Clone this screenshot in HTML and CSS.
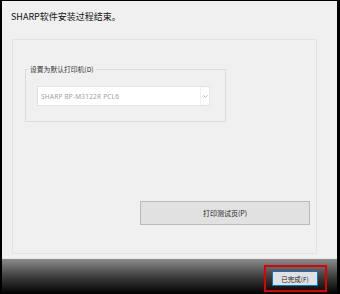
FILE: index.html
```html
<!DOCTYPE html>
<html lang="zh-CN">
<head>
    <meta charset="UTF-8">
    <meta name="viewport" content="width=device-width, initial-scale=1.0">
    <title>SHARP 安装</title>
    <link rel="stylesheet" href="styles.css">
</head>
<body>

<div class="screen">
    <!-- Main dialog area -->
    <div class="dialog">
        <p class="title">SHARP软件安装过程结束。</p>
        <div class="panel">
            <fieldset class="group">
                <legend>设置为默认打印机(D)</legend>
                <div class="combo">
                    <span class="combo-text">SHARP BP-M3122R PCL6</span>
                    <span class="combo-arrow">
                        <svg width="5" height="3" viewBox="0 0 5 3"><path d="M0.3 0.3 L2.5 2.5 L4.7 0.3" fill="none" stroke="#a8a8a8" stroke-width="0.8"/></svg>
                    </span>
                </div>
            </fieldset>
            <button class="btn btn-test" type="button">打印测试页(P)</button>
        </div>
    </div>

    <div class="divider"></div>

    <!-- Bottom bar with the finish button -->
    <div class="footer">
        <div class="highlight">
            <button class="btn btn-done" type="button">已完成(F)</button>
        </div>
    </div>
</div>

</body>
</html>
```

FILE: styles.css
```css
/* Styles for the installer dialog */
body {
    margin: 0;
    padding: 0;
    background: #000000;
    font-family: "Noto Sans CJK SC", "Noto Sans", sans-serif;
    color: #1a1a1a;
}
.screen {
    width: 340px;
    height: 294px;
    box-sizing: border-box;
    padding: 1px 3px 0 2px;
    background: #000000;
    display: flex;
    flex-direction: column;
}
.dialog {
    background: #f0f0f0;
    height: 255px;
    padding: 0 20px 0 10px;
    flex-shrink: 0;
}
.title {
    margin: 0 0 16px -1px;
    padding-top: 9px;
    line-height: 13px;
    font-size: 9px;
    color: #111;
}
.panel {
    height: 215px;
    box-sizing: border-box;
    border: 1px solid #e3e3e3;
    padding: 24px 6px 28px 12px;
    display: flex;
    flex-direction: column;
}
.group {
    align-self: flex-start;
    width: 201px;
    height: 58px;
    box-sizing: border-box;
    margin: 0;
    padding: 0 15px 0 11px;
    border: 1px solid #dcdcdc;
    min-width: 0;
}
.group legend {
    margin-left: -9px;
    padding: 0 2px;
    font-size: 6.8px;
    line-height: 10px;
    color: #333;
}
.combo {
    margin-top: 12px;
    height: 20px;
    box-sizing: border-box;
    border: 1px solid #e2e2e2;
    background: #ffffff;
    display: flex;
    align-items: center;
}
.combo-text {
    flex: 1;
    padding-left: 3px;
    font-family: "Noto Sans", sans-serif;
    font-size: 6.5px;
    letter-spacing: 0.2px;
    color: #a0a0a0;
}
.combo-arrow {
    width: 8px;
    height: 100%;
    border-left: 1px solid #f0f0f0;
    display: flex;
    align-items: center;
    justify-content: center;
}
.btn {
    font-family: "Noto Sans CJK SC", sans-serif;
    background: #e1e1e1;
    color: #222;
    padding: 0;
    margin: 0;
    box-sizing: border-box;
    cursor: pointer;
}
.btn-test {
    align-self: flex-end;
    margin-top: auto;
    width: 170px;
    height: 24px;
    border: 1px solid #bababa;
    font-size: 7px;
}
.divider {
    height: 3px;
    background: linear-gradient(#f8f8f8, #e4e4e4);
    flex-shrink: 0;
}
.footer {
    flex: 1;
    background: linear-gradient(#8c8c8c, #3e3e3e 50%, #000000);
    display: flex;
    justify-content: flex-end;
    align-items: flex-start;
    padding: 6px 10px 0 0;
}
.highlight {
    width: 63px;
    height: 27px;
    box-sizing: border-box;
    border: 2px solid #e00000;
    padding: 4px 7px 4px 6px;
    display: flex;
}
.btn-done {
    width: 46px;
    height: 15px;
    border: 1px solid #0078d7;
    font-size: 6.5px;
}
```
